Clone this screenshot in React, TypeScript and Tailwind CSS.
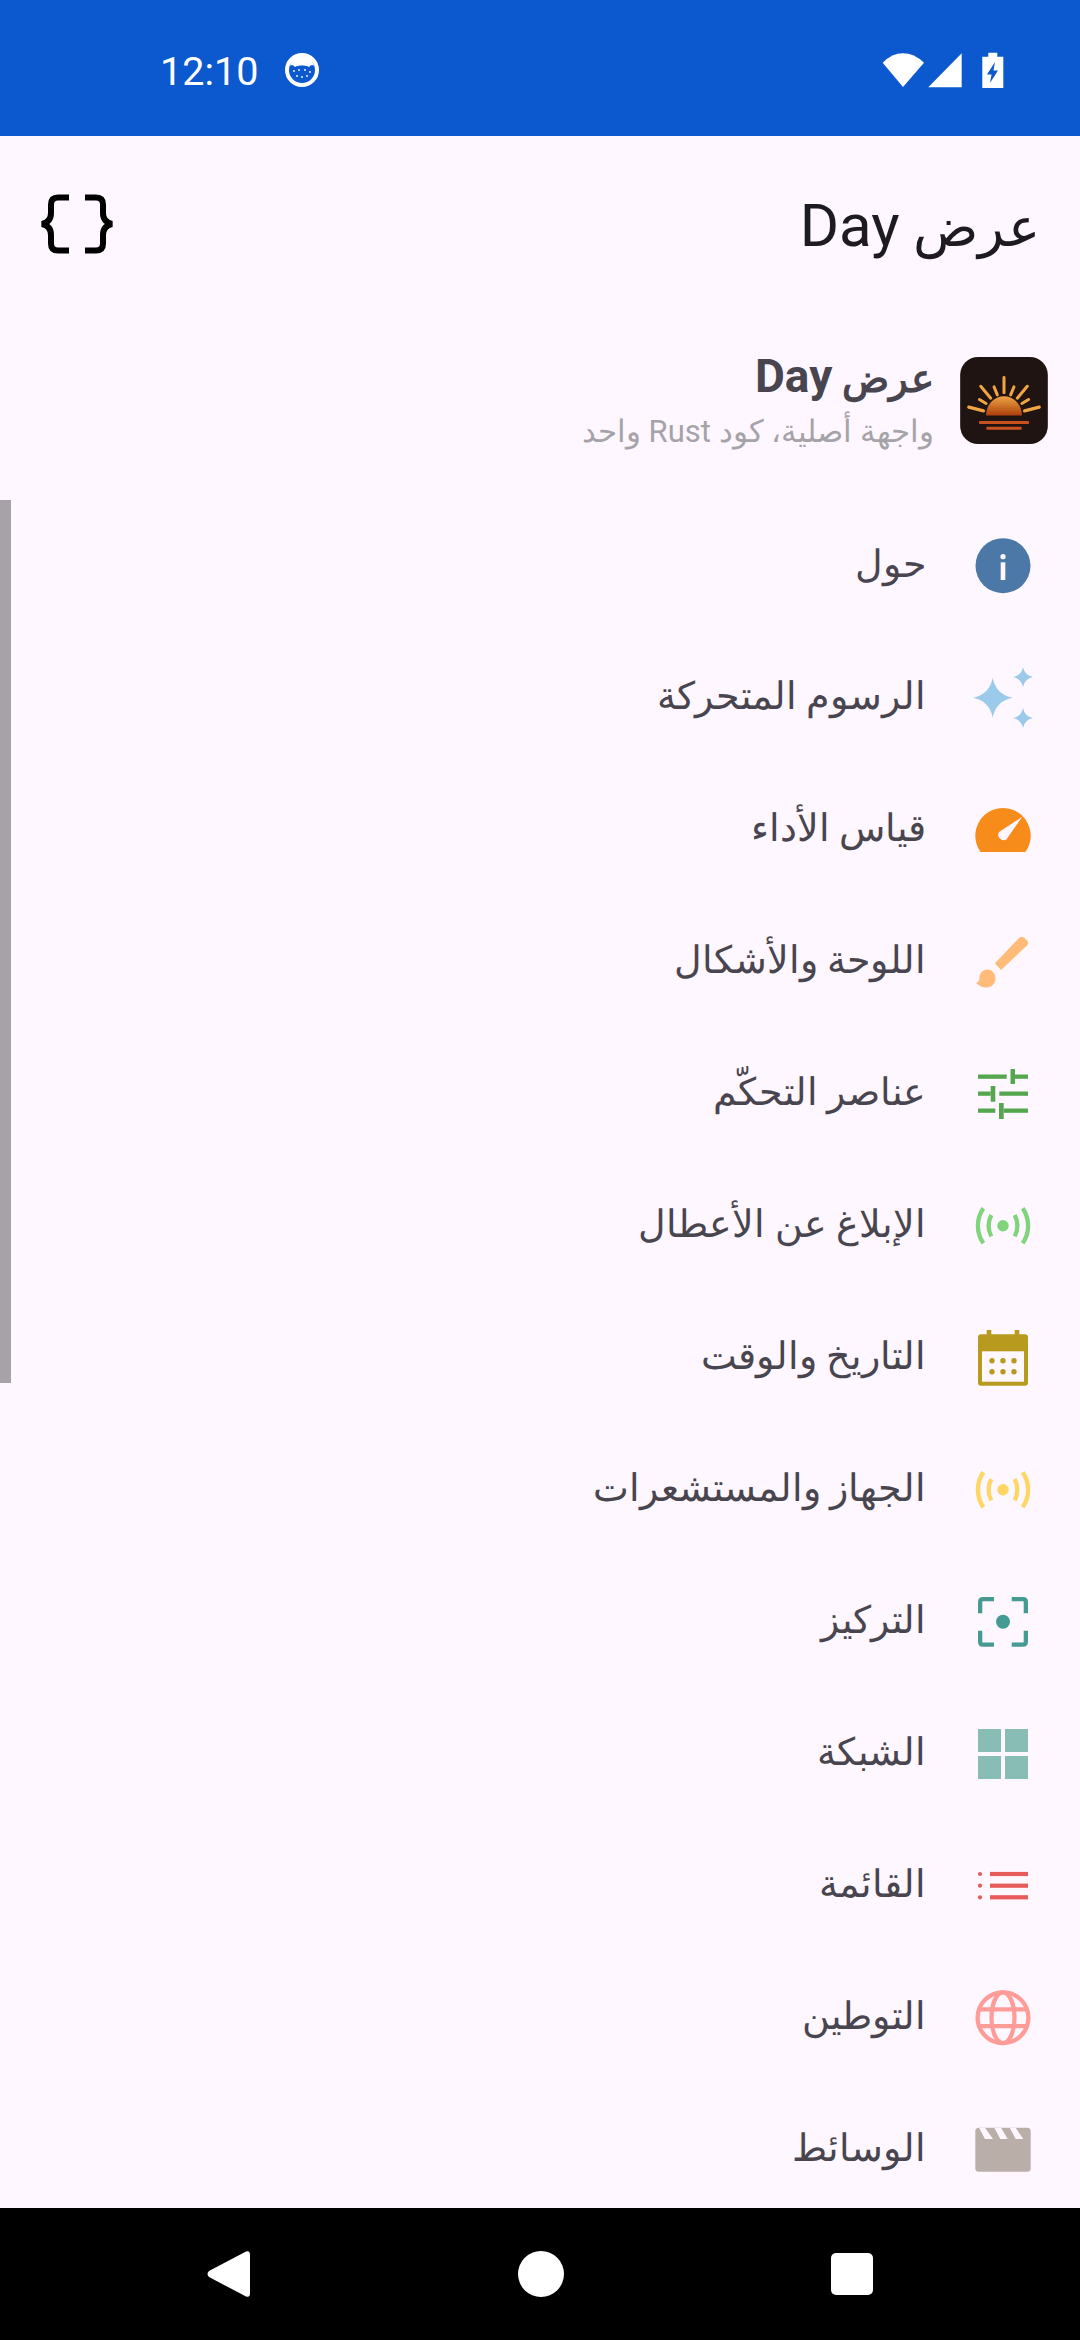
const BG = "#fef7ff"

function Info() {
  return (
    <svg width="60" height="60" viewBox="0 0 60 60">
      <circle cx="30" cy="29.7" r="27.5" fill="#4c78a8" />
      <circle cx="30" cy="20.7" r="2.6" fill={BG} />
      <rect x="27.7" y="26.3" width="4.6" height="17.7" fill={BG} />
    </svg>
  )
}

function star(x: number, y: number, h: number) {
  const k = h * 0.16
  return `M${x} ${y - h}Q${x + k} ${y - k} ${x + h} ${y}Q${x + k} ${y + k} ${x} ${y + h}Q${x - k} ${y + k} ${x - h} ${y}Q${x - k} ${y - k} ${x} ${y - h}Z`
}

function Sparkles() {
  return (
    <svg width="60" height="60" viewBox="0 0 60 60" fill="#9ccaea">
      <path d={star(19.7, 29.7, 20)} />
      <path d={star(50, 9, 10)} />
      <path d={star(50, 50, 10)} />
    </svg>
  )
}

function Gauge() {
  return (
    <svg width="60" height="60" viewBox="0 0 60 60">
      <path d="M7.6 52A27.7 27.7 0 1 1 52.4 52Z" fill="#f78c1b" />
      <path d="M49 17L33.4 39.5A5.5 5.5 0 0 1 26 31.9Z" fill={BG} />
    </svg>
  )
}

function Brush() {
  return (
    <svg width="60" height="60" viewBox="0 0 60 60" fill="#ffbb77">
      <path d="M22 31.3L46 6Q48 4 51 5.5L54.5 9Q56 11.5 54 13.5L28 38Z" />
      <path d="M14.5 37.5C9.5 37.5 6.5 41.5 6.5 45.5C6.5 48.5 5 50.5 3 51C6 54 10 55.5 13.5 55.5C18.5 55.5 22.5 51.5 22.5 46.5C22.5 41.5 19 37.5 14.5 37.5Z" />
    </svg>
  )
}

function Sliders() {
  return (
    <svg width="60" height="60" viewBox="0 0 60 60" fill="#55a74f">
      <rect x="5" y="10.5" width="28.7" height="4.3" />
      <rect x="37.5" y="5" width="4.5" height="15" />
      <rect x="42" y="10.5" width="13" height="4.3" />
      <rect x="5" y="27.5" width="12.7" height="4.3" />
      <rect x="17.7" y="22" width="4.6" height="15.7" />
      <rect x="26.3" y="27.5" width="28.7" height="4.3" />
      <rect x="5" y="44.5" width="17.3" height="4.3" />
      <rect x="26" y="39" width="4.7" height="16" />
      <rect x="30.7" y="44.5" width="24.3" height="4.3" />
    </svg>
  )
}

function Sensors({ color }: { color: string }) {
  return (
    <svg width="60" height="60" viewBox="0 0 60 60" fill="none" stroke={color} strokeWidth="4.3">
      <circle cx="30" cy="29.7" r="5.7" fill={color} stroke="none" />
      <path d="M18.3 19A24 24 0 0 0 18.3 40.4" />
      <path d="M41.7 19A24 24 0 0 1 41.7 40.4" />
      <path d="M10.3 12.2A31 31 0 0 0 10.3 47.2" />
      <path d="M49.7 12.2A31 31 0 0 1 49.7 47.2" />
    </svg>
  )
}

function Calendar() {
  const c = "#b89a1e"
  return (
    <svg width="60" height="60" viewBox="0 0 60 60" fill={c}>
      <rect x="5" y="6.3" width="50" height="51.4" rx="3" />
      <rect x="13.7" y="2" width="4.6" height="6" />
      <rect x="41.7" y="2" width="4.6" height="6" />
      <rect x="9" y="23.3" width="42" height="30.4" fill={BG} />
      {[19, 30, 41].map((x) =>
        [32.7, 43.7].map((y) => <circle key={`${x}-${y}`} cx={x} cy={y} r="2.7" />)
      )}
    </svg>
  )
}

function Focus() {
  return (
    <svg width="60" height="60" viewBox="0 0 60 60" fill="none" stroke="#459a94" strokeWidth="4.3">
      <path d="M7.15 21.3V10Q7.15 7.15 10 7.15H21" />
      <path d="M38.7 7.15H50Q52.85 7.15 52.85 10V21.3" />
      <path d="M7.15 38.7V49.7Q7.15 52.55 10 52.55H21" />
      <path d="M38.7 52.55H50Q52.85 52.55 52.85 49.7V38.7" />
      <circle cx="30" cy="29.7" r="7" fill="#459a94" stroke="none" />
    </svg>
  )
}

function GridIcon() {
  return (
    <svg width="60" height="60" viewBox="0 0 60 60" fill="#87bdb5">
      <rect x="5" y="5" width="23" height="23" />
      <rect x="32" y="5" width="23" height="23" />
      <rect x="5" y="32" width="23" height="23" />
      <rect x="32" y="32" width="23" height="23" />
    </svg>
  )
}

function ListIcon() {
  return (
    <svg width="60" height="60" viewBox="0 0 60 60" fill="#e85b5b">
      {[18, 29.7, 41.3].map((y) => (
        <g key={y}>
          <circle cx="7" cy={y} r="2.1" />
          <rect x="17" y={y - 2.1} width="38" height="4.2" />
        </g>
      ))}
    </svg>
  )
}

function Globe() {
  return (
    <svg width="60" height="60" viewBox="0 0 60 60" fill="none" stroke="#ff9c98" strokeWidth="4.3">
      <circle cx="30" cy="29.7" r="25.4" />
      <ellipse cx="30" cy="29.7" rx="11.5" ry="25.4" />
      <path d="M6 21.3H54M6 38.1H54" />
    </svg>
  )
}

function Clapper() {
  return (
    <svg width="60" height="60" viewBox="0 0 60 60">
      <rect x="2.3" y="7.7" width="55.4" height="44" rx="3.5" fill="#baaea8" />
      <path d="M6 7.7H12L20 19H12Z M21.3 7.7H28L34.7 19H27.3Z M36.7 7.7H42.7L50.3 19H42.7Z" fill={BG} />
    </svg>
  )
}

function Braces() {
  return (
    <svg width="88" height="66" viewBox="33 193 88 66" fill="none" stroke="#000" strokeWidth="6">
      <path d="M69 197.5H58Q51 197.5 51 204.5V213Q51 222 42 224Q51 226 51 235V243.5Q51 250.5 58 250.5H69" />
      <path d="M85 197.5H96Q103 197.5 103 204.5V213Q103 222 112 224Q103 226 103 235V243.5Q103 250.5 96 250.5H85" />
    </svg>
  )
}

function Sunrise() {
  const rays = [
    [192, 110, 192, 156, 9],
    [122, 136, 152, 172, 9],
    [262, 136, 232, 172, 9],
    [162, 138, 172, 162, 9],
    [222, 138, 212, 162, 9],
    [118, 176, 138, 188, 9],
    [266, 176, 246, 188, 9],
    [86, 199, 130, 210, 10],
    [298, 199, 254, 210, 10],
  ]
  return (
    <svg width="88" height="87" viewBox="60 48 264 262" className="shrink-0">
      <defs>
        <linearGradient id="sun" x1="0" y1="0" x2="0" y2="1">
          <stop offset="0" stopColor="#eda544" />
          <stop offset="1" stopColor="#ad3f0c" />
        </linearGradient>
      </defs>
      <rect x="60" y="48" width="264" height="262" rx="54" fill="#201412" />
      {rays.map(([x1, y1, x2, y2, w]) => (
        <line key={`${x1}-${y1}`} x1={x1} y1={y1} x2={x2} y2={y2} stroke="#f0a444" strokeWidth={w} strokeLinecap="round" />
      ))}
      <path d="M138 224A54 58 0 0 1 246 224Z" fill="url(#sun)" />
      <rect x="117" y="241" width="150" height="9" rx="2" fill="#c9501f" />
      <rect x="139" y="258" width="106" height="9" rx="2" fill="#c9501f" />
    </svg>
  )
}

function CatBadge() {
  return (
    <svg width="36" height="36" viewBox="0 0 36 36" className="shrink-0">
      <circle cx="18" cy="18" r="15" fill="#0c59cf" stroke="#fff" strokeWidth="4" />
      <path d="M6 14C7 8 12 3 18 3C24 3 29 8 30 14C28 12 27 13 25 15C22 13 14 13 11 15C9 13 8 12 6 14Z" fill="#fff" />
      <g fill="#fff">
        <circle cx="10" cy="19" r="0.9" />
        <circle cx="15" cy="18" r="0.9" />
        <circle cx="21" cy="18" r="0.9" />
        <circle cx="26" cy="20" r="0.9" />
        <circle cx="13" cy="24" r="0.9" />
        <circle cx="18" cy="25" r="0.9" />
        <circle cx="23" cy="24" r="0.9" />
      </g>
    </svg>
  )
}

const items = [
  { label: "حول", icon: <Info /> },
  { label: "الرسوم المتحركة", icon: <Sparkles /> },
  { label: "قياس الأداء", icon: <Gauge /> },
  { label: "اللوحة والأشكال", icon: <Brush /> },
  { label: "عناصر التحكّم", icon: <Sliders /> },
  { label: "الإبلاغ عن الأعطال", icon: <Sensors color="#80d47c" /> },
  { label: "التاريخ والوقت", icon: <Calendar /> },
  { label: "الجهاز والمستشعرات", icon: <Sensors color="#fdd663" /> },
  { label: "التركيز", icon: <Focus /> },
  { label: "الشبكة", icon: <GridIcon /> },
  { label: "القائمة", icon: <ListIcon /> },
  { label: "التوطين", icon: <Globe /> },
  { label: "الوسائط", icon: <Clapper /> },
]

export default function App() {
  return (
    <div className="relative flex h-[2340px] w-[1080px] flex-col overflow-hidden bg-[#fef7ff] font-['Roboto','Noto_Sans',sans-serif]">
      {/* status bar */}
      <div className="flex h-[136px] shrink-0 items-center justify-between bg-[#0c59cf] pl-[160px] pr-[76px] pt-1 text-white">
        <div className="flex items-center gap-[26px]">
          <span className="mt-[4px] text-[39.5px] leading-none">12:10</span>
          <CatBadge />
        </div>
        <svg width="124" height="40" viewBox="880 50 124 40">
          <path d="M903 87L882.7 62.7Q892 53.3 903 53.3Q914 53.3 924 62.7Z" fill="#fff" />
          <path d="M928.3 87.3L961.7 53.3V87.3Z" fill="#fff" />
          <path d="M988.3 52.7H997.3V56.7H1003.3V88H982.3V56.7H988.3Z" fill="#fff" />
          <path d="M995 62L987 74.5H991.5L990 83L998 70.5H993.5Z" fill="#0c59cf" />
        </svg>
      </div>

      {/* top bar */}
      <div dir="rtl" className="flex h-[180px] shrink-0 items-center justify-between pl-[33px] pr-[40px]">
        <h1 className="text-[54px] leading-none font-normal text-[#1d1b20]">
          عرض <span className="text-[60px]">Day</span>
        </h1>
        <Braces />
      </div>

      {/* app header */}
      <div dir="rtl" className="flex h-[184px] shrink-0 items-center gap-[26px] pb-4 pr-[32px]">
        <Sunrise />
        <div className="flex flex-col gap-[9px]">
          <span className="text-[39px] leading-[52px] font-bold text-[#49454f]">
            عرض <span className="text-[46px]">Day</span>
          </span>
          <span className="text-[31px] leading-[36px] text-[#a5a3a8]">واجهة أصلية، كود Rust واحد</span>
        </div>
      </div>

      {/* list */}
      <div dir="rtl" className="min-h-0 flex-1 overflow-hidden">
        {items.map((item) => (
          <div key={item.label} className="flex h-[132px] items-center gap-[47px] pr-[47px]">
            <span className="flex shrink-0">{item.icon}</span>
            <span className="pb-[2px] text-[37.5px] leading-none text-[#49454f]">{item.label}</span>
          </div>
        ))}
      </div>

      {/* nav bar */}
      <div className="flex h-[132px] shrink-0 items-center justify-center gap-[267px] bg-black">
        <svg width="44" height="48" viewBox="0 0 44 48">
          <path d="M39 1.5Q43 0 43 5V43Q43 48 39 46.5L2 27Q-1 24 2 21Z" fill="#fff" />
        </svg>
        <div className="size-[46px] rounded-full bg-white" />
        <div className="size-[42px] rounded-[5px] bg-white" />
      </div>

      {/* scrollbar */}
      <div className="absolute left-0 top-[500px] h-[883px] w-[11px] bg-[#a6a2a8]" />
    </div>
  )
}
